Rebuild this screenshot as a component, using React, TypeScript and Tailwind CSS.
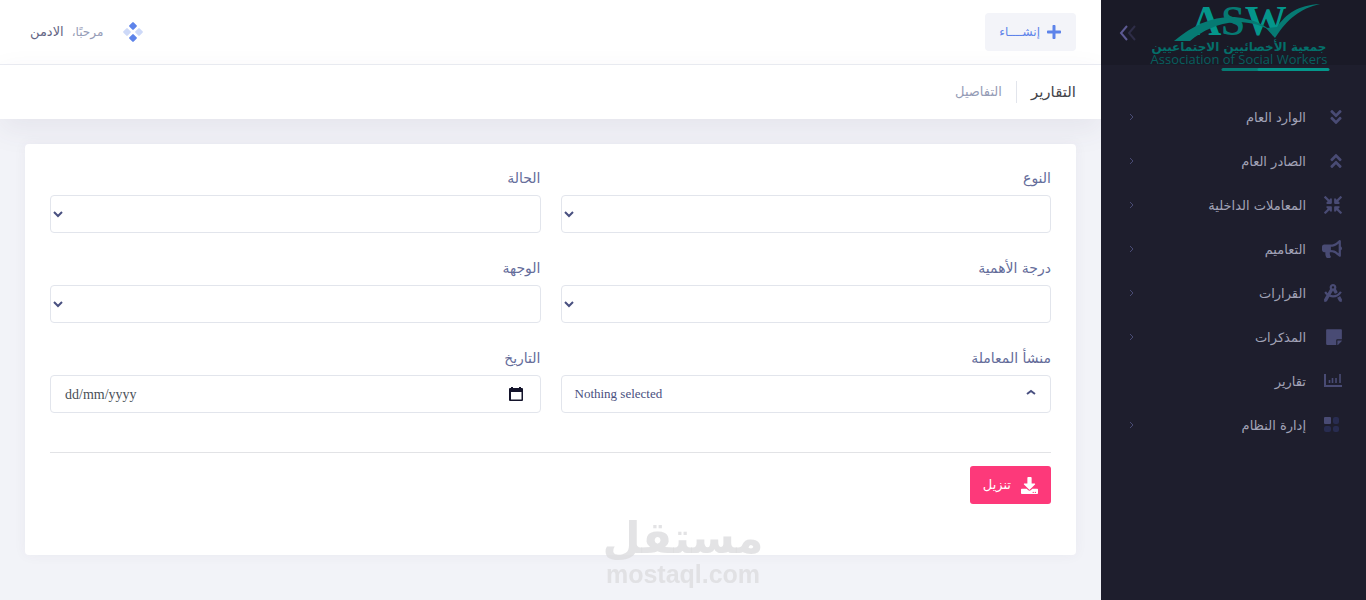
import type { ReactNode } from "react"
import {
  FaAngleDoubleDown,
  FaAngleDoubleUp,
  FaBullhorn,
  FaCompressArrowsAlt,
  FaDownload,
  FaDraftingCompass,
  FaPlus,
  FaStickyNote,
} from "react-icons/fa"

function ChartIcon() {
  return (
    <svg viewBox="0 0 18 16" className="h-4 w-[18px]" fill="none" stroke="currentColor" strokeWidth="2">
      <path d="M1 1v12h17" />
      <path d="M5.500 7v3M8.500 5v5M12 5v5M16 1v9" strokeWidth="1.600" />
    </svg>
  )
}

function BlocksIcon() {
  return (
    <svg viewBox="0 0 18 16" className="h-4 w-[18px]" fill="currentColor">
      <rect x="0" y="0" width="7" height="7" rx="1" />
      <g fill="#282c50">
        <rect x="9" y="0" width="6" height="7" rx="2" />
        <rect x="0" y="9" width="7" height="6" rx="2" />
        <rect x="9" y="9" width="6" height="6" rx="2" />
      </g>
    </svg>
  )
}

const menu: { label: string; icon: ReactNode; sub: boolean }[] = [
  { label: "الوارد العام", icon: <FaAngleDoubleDown className="h-[18px] w-3" />, sub: true },
  { label: "الصادر العام", icon: <FaAngleDoubleUp className="h-[18px] w-3" />, sub: true },
  { label: "المعاملات الداخلية", icon: <FaCompressArrowsAlt className="h-[18px] w-[18px]" />, sub: true },
  { label: "التعاميم", icon: <FaBullhorn className="h-[18px] w-5" />, sub: true },
  { label: "القرارات", icon: <FaDraftingCompass className="h-[18px] w-[18px]" />, sub: true },
  { label: "المذكرات", icon: <FaStickyNote className="h-[18px] w-4" />, sub: true },
  { label: "تقارير", icon: <ChartIcon />, sub: false },
  { label: "إدارة النظام", icon: <BlocksIcon />, sub: true },
]

function Logo() {
  return (
    <svg viewBox="0 0 182 72" className="h-[72px] w-[182px]" role="img" aria-label="ASW">
      <text x="43" y="35" direction="ltr" fontFamily="Liberation Serif, serif" fontWeight="bold" fontSize="42" fill="#04968b">
        A<tspan fill="#067a73">S</tspan>W
      </text>
      <path d="M26 41C50 21 75 13 98 19C108 21 116 25 122 30C110 24 100 22 88 22C70 23 54 31 42 41Z" fill="#067a73" />
      <path d="M118 28L127 38C140 18 152 9 172 4C150 5 138 14 129 27Z" fill="#067a73" />
      <text x="91" y="51" textAnchor="middle" direction="rtl" fontFamily="DejaVu Sans, sans-serif" fontWeight="bold" fontSize="12" fill="#046f6a">جمعية الأخصائيين الاجتماعيين</text>
      <text x="91" y="64" textAnchor="middle" direction="ltr" fontFamily="Open Sans, sans-serif" fontSize="13" fill="#075f5e">Association of Social Workers</text>
      <path d="M75 69.500h38" stroke="#067a73" strokeWidth="3" strokeLinecap="round" />
      <path d="M111 69.500h69" stroke="#04968b" strokeWidth="3" strokeLinecap="round" />
    </svg>
  )
}

function Sidebar() {
  return (
    <aside className="relative z-10 w-[265px] shrink-0 bg-[#1e1e2d]">
      <div className="flex h-[65px] items-start justify-between bg-[#1a1a27] pr-9 pl-4">
        <Logo />
        <button type="button" aria-label="طي القائمة" className="mt-6 text-[#5d5a93]">
          <svg viewBox="0 0 20 18" className="h-[18px] w-5" fill="none" stroke="currentColor" strokeWidth="2">
            <path d="M10 2L4 9l6 7" />
            <path d="M18 2l-6 7 6 7" opacity="0.300" />
          </svg>
        </button>
      </div>
      <nav className="pt-[30px]">
        {menu.map((item) => (
          <a key={item.label} href="#" className="flex h-11 items-center pr-6 pl-7 text-[13px] text-[#a2a3b7]">
            <span className="flex w-5 justify-start text-[#494b74]">{item.icon}</span>
            <span className="mr-4 flex-1 pt-0.5">{item.label}</span>
            {item.sub && (
              <svg viewBox="0 0 5 8" className="h-2 w-[5px] text-[#494b74]" fill="none" stroke="currentColor">
                <path d="M1 1l3 3-3 3" />
              </svg>
            )}
          </a>
        ))}
      </nav>
    </aside>
  )
}

function Header() {
  return (
    <header className="flex h-[65px] items-center justify-between border-b border-[#ebedf3] bg-white pr-[25px] pl-[30px]">
      <button type="button" className="flex h-[38px] items-center gap-1.5 rounded bg-[#f3f4f9] px-[14px] text-[12px] text-[#5d83ea]">
        <FaPlus className="h-4 w-4" />
        إنشــــاء
      </button>
      <div className="flex items-center text-[13px]">
        <svg viewBox="0 0 20 20" className="ml-5 h-5 w-5" fill="#5d83ea">
          <rect x="7" y="1" width="6" height="6" rx="1" transform="rotate(45 10 4)" />
          <rect x="7" y="13" width="6" height="6" rx="1" transform="rotate(45 10 16)" />
          <g opacity="0.300">
            <rect x="1" y="7" width="6" height="6" rx="1" transform="rotate(45 4 10)" />
            <rect x="13" y="7" width="6" height="6" rx="1" transform="rotate(45 16 10)" />
          </g>
        </svg>
        <span className="ml-2 text-[12px] text-[#959cb6]">مرحبًا،</span>
        <span className="text-[#636584]">الادمن</span>
      </div>
    </header>
  )
}

function SelectField({ id, label }: { id: string; label: string }) {
  return (
    <div>
      <label htmlFor={id} className="mb-2 block text-[14px] leading-[18px] text-[#646c9a]">{label}</label>
      <select id={id} className="h-[38px] w-full rounded border border-[#e2e5ec] bg-white pl-px text-[13px] text-[#495080]">
        <option value=""></option>
      </select>
    </div>
  )
}

function ReportForm() {
  return (
    <form className="rounded bg-white p-[25px] pb-[51px] shadow-[0_0_13px_rgba(82,63,105,0.05)]">
      <div className="grid grid-cols-2 gap-x-5 gap-y-[26px]">
        <SelectField id="type" label="النوع" />
        <SelectField id="status" label="الحالة" />
        <SelectField id="priority" label="درجة الأهمية" />
        <SelectField id="destination" label="الوجهة" />
        <div>
          <label htmlFor="origin" className="mb-2 block text-[14px] leading-[18px] text-[#646c9a]">منشأ المعاملة</label>
          <button id="origin" type="button" className="flex h-[38px] w-full items-center justify-between rounded border border-[#e2e5ec] px-[13px] font-['Liberation_Serif',serif] text-[13px] text-[#495080]">
            <svg viewBox="0 0 12 12" className="h-3 w-3" fill="none" stroke="currentColor" strokeWidth="2">
              <path d="M2 6l4-3 4 3" />
            </svg>
            Nothing selected
          </button>
        </div>
        <div>
          <label htmlFor="date" className="mb-2 block text-[14px] leading-[18px] text-[#646c9a]">التاريخ</label>
          <div dir="ltr" className="flex h-[38px] items-center rounded border border-[#e2e5ec] pr-4 pl-[14px]">
            <input id="date" type="text" placeholder="dd/mm/yyyy" className="min-w-0 flex-1 font-['Liberation_Serif',serif] text-[14px] outline-none placeholder:text-[#495057]" />
            <button type="button" aria-label="اختر التاريخ" className="text-[#14142b]">
              <svg viewBox="0 0 16 16" className="block h-4 w-4" fill="currentColor">
                <path d="M3 1h2v1h6V1h2v1h1q1 0 1 1v11q0 1-1 1H2q-1 0-1-1V3q0-1 1-1h1zM3 6v7.500h10.500V6z" fillRule="evenodd" />
              </svg>
            </button>
          </div>
        </div>
      </div>
      <div className="mt-[39px] flex border-t border-[#e2e3e6] pt-[13px]">
        <button type="submit" className="flex h-[38px] items-center gap-2.5 rounded-[3px] bg-[#fd397a] px-[13px] text-[13px] text-white">
          <FaDownload className="h-[17px] w-[17px]" />
          تنزيل
        </button>
      </div>
    </form>
  )
}

export default function App() {
  return (
    <div dir="rtl" className="flex min-h-screen bg-[#f2f3f8] font-['DejaVu_Sans',sans-serif]">
      <Sidebar />
      <div className="min-w-0 flex-1">
        <Header />
        <div className="flex h-[54px] items-center bg-white pr-[25px] shadow-[0_10px_30px_rgba(82,63,105,0.08)]">
          <h1 className="text-[15px] text-[#434349]">التقارير</h1>
          <span className="mx-[14px] h-[22px] w-px bg-[#e2e5ec]" />
          <span className="text-[13px] text-[#959cb6]">التفاصيل</span>
        </div>
        <main className="p-[25px]">
          <ReportForm />
        </main>
      </div>
      <div className="pointer-events-none fixed bottom-3.5 left-1/2 flex -translate-x-1/2 flex-col items-center text-[#dcdcdf]/80">
        <span className="text-[44px] leading-[48px] font-bold">مستقل</span>
        <span className="font-['Liberation_Sans',sans-serif] text-[25px] leading-6 font-bold">mostaql.com</span>
      </div>
    </div>
  )
}
